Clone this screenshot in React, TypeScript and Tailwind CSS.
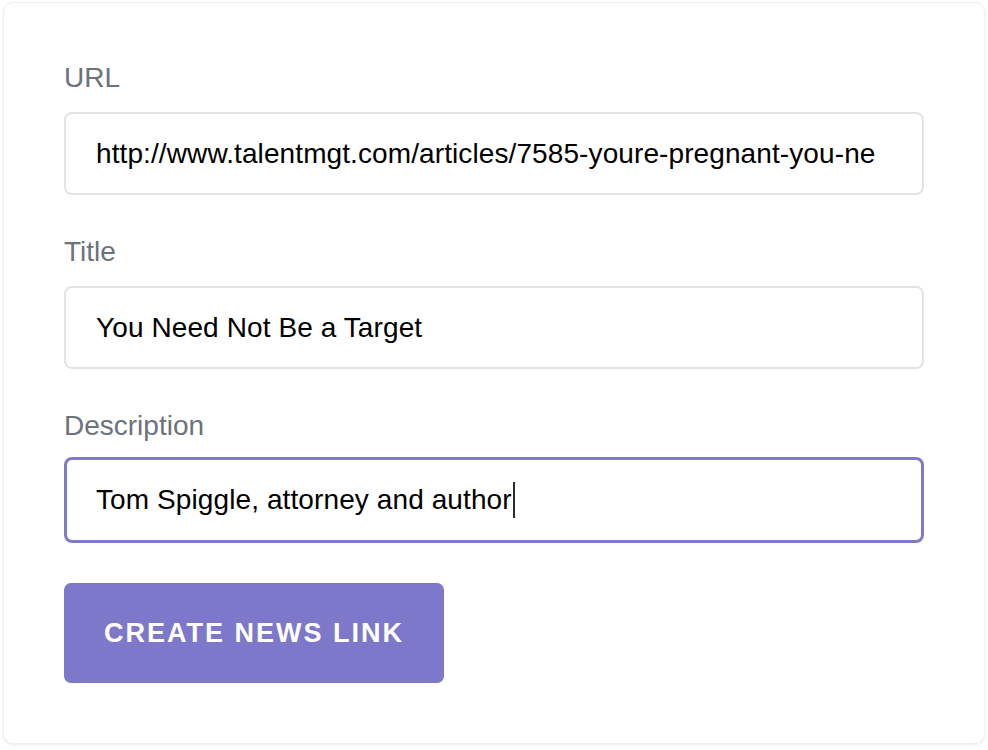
import React from 'react';

const fields = [
  { label: 'URL', value: 'http://www.talentmgt.com/articles/7585-youre-pregnant-you-ne' },
  { label: 'Title', value: 'You Need Not Be a Target' },
];

export default function App() {
  return (
    <div className="min-h-[750px] bg-white pt-[2px] pl-[3px] font-['Liberation_Sans',Arial,sans-serif]">
      <div className="w-[982px] h-[742px] rounded-[10px] border border-[#efefef] bg-white shadow-[0_1px_3px_rgba(0,0,0,0.08)] px-[60px] pt-[58px]">
        <form className="flex flex-col" onSubmit={(e) => e.preventDefault()}>
          {fields.map((f) => (
            <div key={f.label} className="flex flex-col mb-[40px]">
              <label className="text-[28px] leading-[34px] text-[#6b727b] mb-[17px]">{f.label}</label>
              <div className="h-[83px] rounded-[8px] border-2 border-[#e3e3e3] pl-[30px] pr-[20px] flex items-center">
                <span className="text-[28px] tracking-[0.1px] text-black whitespace-nowrap">{f.value}</span>
              </div>
            </div>
          ))}

          {/* Description, focused */}
          <div className="flex flex-col mb-[40px]">
            <label className="text-[28px] leading-[34px] text-[#6b727b] mb-[14px]">Description</label>
            <div className="h-[86px] rounded-[8px] border-[3px] border-[#7f7ac8] pl-[29px] pr-[26px] flex items-center">
              <span className="text-[28px] tracking-[0.1px] text-black whitespace-nowrap">Tom Spiggle, attorney and author</span>
              <span className="inline-block w-[2px] h-[36px] bg-[#2a2a2a] ml-[1px]" />
            </div>
          </div>

          <button
            type="submit"
            className="w-[380px] h-[100px] rounded-[7px] bg-[#7d78c9] text-white text-[27px] font-bold uppercase tracking-[2px]"
          >
            Create News Link
          </button>
        </form>
      </div>
    </div>
  );
}
